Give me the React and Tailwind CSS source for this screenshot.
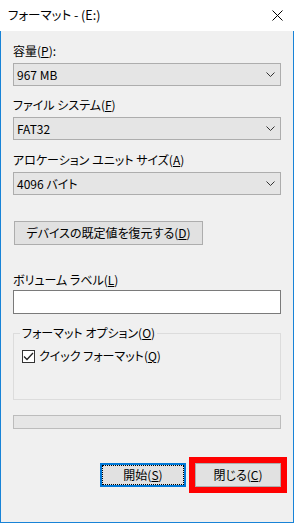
import React from "react";

const font = "font-['Noto_Sans_CJK_JP','Noto_Sans',sans-serif] [font-feature-settings:'palt']";

function Chevron() {
  return (
    <svg width="9" height="5" viewBox="0 0 9 5" className="mr-[5px]">
      <polyline points="0.5,0.5 4.5,4.5 8.5,0.5" fill="none" stroke="#333" strokeWidth="1" />
    </svg>
  );
}

function Combo({ value }) {
  return (
    <div className="mt-[4px] h-[23px] border border-[#adadad] bg-[#e5e5e5] flex items-center justify-between pl-[3px]">
      <span className="text-[12px] leading-[16px] text-black">{value}</span>
      <Chevron />
    </div>
  );
}

function Label({ children, className = "" }) {
  return <div className={"h-[16px] leading-[16px] text-[12px] text-black " + className}>{children}</div>;
}

export default function App() {
  return (
    <div className={"w-[294px] h-[523px] bg-[#f0f0f0] flex flex-col " + font}>
      <div className="h-[31px] bg-white flex items-center justify-between pl-[8px] pr-[11px] shrink-0">
        <span className="text-[12.5px] text-black">フォーマット - (E:)</span>
        <svg width="11" height="11" viewBox="0 0 11 11">
          <path d="M0.5 0.5 L10.5 10.5 M10.5 0.5 L0.5 10.5" stroke="#000" strokeWidth="1" />
        </svg>
      </div>
      <div className="flex-1 border-x border-b border-[#1883d7] px-[12px] flex flex-col">
        <Label className="mt-[12px]">
          容量(<u>P</u>):
        </Label>
        <Combo value="967 MB" />
        <Label className="mt-[11px]">
          ファイル システム(<u>F</u>)
        </Label>
        <Combo value="FAT32" />
        <Label className="mt-[12px]">
          アロケーション ユニット サイズ(<u>A</u>)
        </Label>
        <Combo value="4096 バイト" />

        <button className="mt-[26px] ml-[1px] w-[189px] h-[24px] border border-[#adadad] bg-[#e1e1e1] text-[12px] text-black flex items-center justify-center">
          デバイスの既定値を復元する(<u>D</u>)
        </button>

        <Label className="mt-[27px]">
          ボリューム ラベル(<u>L</u>)
        </Label>
        <div className="mt-[2px] h-[24px] border border-[#7a7a7a] bg-white" />

        <fieldset className="mt-[11px] h-[75px] border border-[#dcdcdc] px-[8px]">
          <legend className="-ml-[2px] px-[2px] text-[12px] leading-[16px] text-black">
            フォーマット オプション(<u>O</u>)
          </legend>
          <label className="mt-[7px] flex items-center gap-[4px]">
            <span className="w-[13px] h-[13px] border border-[#333] bg-white flex items-center justify-center">
              <svg width="11" height="9" viewBox="0 0 11 9">
                <polyline points="1,4.5 4,7.5 10,1" fill="none" stroke="#222" strokeWidth="1.3" />
              </svg>
            </span>
            <span className="text-[12px] leading-[16px] text-black">
              クイック フォーマット(<u>Q</u>)
            </span>
          </label>
        </fieldset>

        <div className="mt-[15px] h-[14px] border border-[#bcbcbc] bg-[#e6e6e6]" />

        <div className="mt-[28px] flex items-center ml-[87px] gap-[3px]">
          <button className="shrink-0 w-[86px] h-[24px] border-2 border-[#0078d7] bg-[#e1e1e1] p-0">
            <div className="h-full border border-dotted border-black flex items-center justify-center text-[12px] text-black">
              開始(<u>S</u>)
            </div>
          </button>
          <div className="shrink-0 border-[6px] border-[#ff0000]">
            <button className="w-[86px] h-[24px] border border-[#adadad] bg-[#e1e1e1] flex items-center justify-center text-[12px] text-black">
              閉じる(<u>C</u>)
            </button>
          </div>
        </div>
      </div>
    </div>
  );
}
